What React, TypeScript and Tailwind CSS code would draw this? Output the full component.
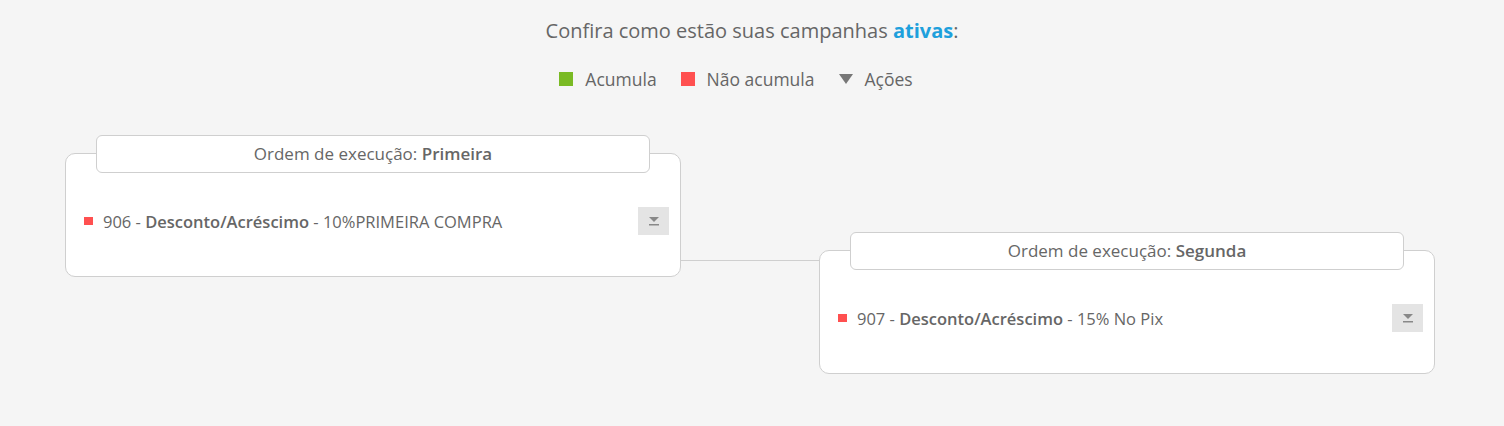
import { FC } from 'react';

interface campaignProps {
    order: string;
    id: string;
    kind: string;
    name: string;
}

const DropIcon: FC = () => (
    <svg width="12" height="10" viewBox="0 0 12 10">
        <path d="M1 1h10L6 6z" fill="#888" />
        <rect x="1" y="8" width="10" height="1.5" fill="#888" />
    </svg>
);

const CampaignCard: FC<campaignProps> = ({ order, id, kind, name }) => {
    return (
        <div className="w-[616px] h-[124px] shrink-0 bg-white border border-[#cfcfcf] rounded-[10px] flex flex-col">
            <div className="mx-[30px] -mt-[19px] h-[38px] bg-white border border-[#cfcfcf] rounded-[6px] flex items-center justify-center text-[17px] text-[#666]">
                Ordem de execução:&nbsp;<span className="font-semibold">{order}</span>
            </div>
            <div className="flex items-center pl-[18px] pr-[11px] mt-[34px]">
                <span className="w-[9px] h-[8px] bg-[#ff5050] mr-[10px]" />
                <span className="text-[16.5px] leading-[24px] pt-[2px] text-[#666]">
                    {id} - <span className="font-semibold">{kind}</span> - {name}
                </span>
                <button className="ml-auto w-[31px] h-[28px] bg-[#e4e4e4] flex items-center justify-center">
                    <DropIcon />
                </button>
            </div>
        </div>
    );
};

export default function App() {
    return (
        <div
            className="w-[1504px] h-[426px] bg-[#f5f5f5] flex flex-col"
            style={{ fontFamily: '"Open Sans", "Noto Sans", sans-serif' }}
        >
            <h1 className="mt-[17px] text-center text-[20px] leading-[28px] text-[#666]">
                Confira como estão suas campanhas <span className="font-bold text-[#1ea0dc]">ativas</span>:
            </h1>
            <div className="mt-[22px] pr-[32px] flex items-center justify-center gap-[24px] text-[17.5px] leading-[24px] text-[#666]">
                <div className="flex items-center gap-[12px]">
                    <span className="w-[14px] h-[14px] bg-[#7aba24]" />
                    Acumula
                </div>
                <div className="flex items-center gap-[12px]">
                    <span className="w-[14px] h-[14px] bg-[#ff5050]" />
                    Não acumula
                </div>
                <div className="flex items-center gap-[12px]">
                    <svg width="14" height="10" viewBox="0 0 14 10">
                        <path d="M0 0h14L7 10z" fill="#777" />
                    </svg>
                    Ações
                </div>
            </div>
            <div className="mt-[62px] pl-[65px] flex items-start">
                <CampaignCard order="Primeira" id="906" kind="Desconto/Acréscimo" name="10%PRIMEIRA COMPRA" />
                <div className="w-[138px] mt-[107px] border-t border-[#cfcfcf]" />
                <div className="mt-[97px]">
                    <CampaignCard order="Segunda" id="907" kind="Desconto/Acréscimo" name="15% No Pix" />
                </div>
            </div>
        </div>
    );
}
